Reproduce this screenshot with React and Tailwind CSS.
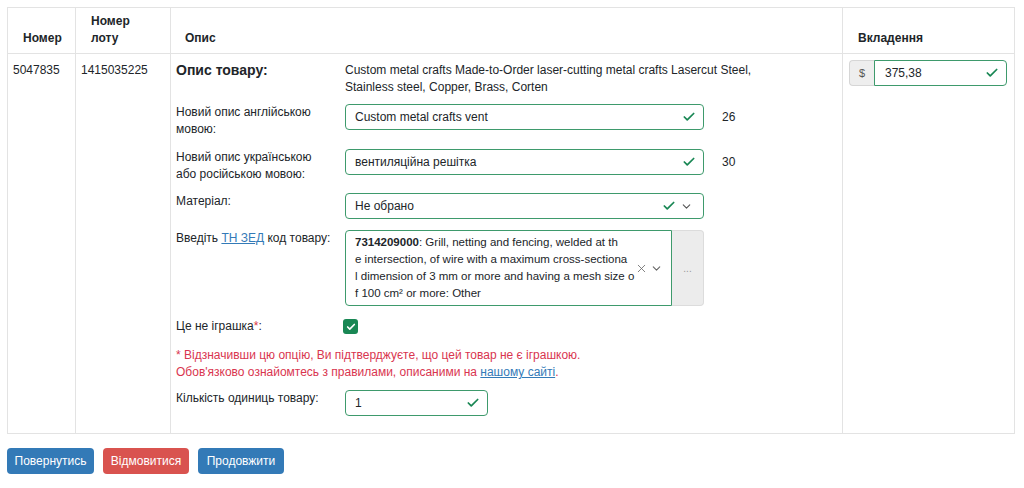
import { Check, ChevronDown, X } from 'lucide-react';

const font = { fontFamily: '"Liberation Sans", Arial, sans-serif' };

function ValidCheck({ className = '' }) {
  return <Check className={`h-[14px] w-[14px] text-[#198754] ${className}`} strokeWidth={3} />;
}

function TextInput({ value, width = 'w-[359px]' }) {
  return (
    <div className={`flex h-[26px] ${width} items-center justify-between rounded-[4px] border border-[#3e9a6c] bg-white pl-[9px] pr-[7px]`}>
      <span className="text-[12px] text-[#212529]">{value}</span>
      <ValidCheck />
    </div>
  );
}

function FormRow({ label, children, className = '' }) {
  return (
    <div className={`flex ${className}`}>
      <div className="w-[169px] shrink-0 pr-2 text-[12px] leading-[17px] text-[#212529]">{label}</div>
      {children}
    </div>
  );
}

export default function App() {
  return (
    <div className="h-[488px] w-[1024px] bg-white px-[7px] pt-[7px]" style={font}>
      <table className="w-[1007px] table-fixed border-collapse border border-[#e3e3e3] text-[12px] text-[#212529]">
        <colgroup>
          <col className="w-[68px]" />
          <col className="w-[95px]" />
          <col className="w-[672px]" />
          <col className="w-[172px]" />
        </colgroup>
        <thead>
          <tr className="h-[46px] border-b border-[#e3e3e3]">
            <th className="border-r border-[#e3e3e3] pb-[6px] pl-[15px] text-left align-bottom font-bold leading-[17px]">Номер</th>
            <th className="border-r border-[#e3e3e3] pb-[6px] pl-[15px] text-left align-bottom font-bold leading-[17px]">
              Номер
              <br />
              лоту
            </th>
            <th className="border-r border-[#e3e3e3] pb-[6px] pl-[14px] text-left align-bottom font-bold leading-[17px]">Опис</th>
            <th className="pb-[6px] pl-[15px] text-left align-bottom font-bold leading-[17px]">Вкладення</th>
          </tr>
        </thead>
        <tbody>
          <tr className="h-[380px]">
            <td className="border-r border-[#e3e3e3] pl-[5px] pr-[4px] pt-[8px] align-top leading-[17px]">5047835</td>
            <td className="border-r border-[#e3e3e3] pl-[5px] pr-[4px] pt-[8px] align-top leading-[17px]">1415035225</td>
            <td className="border-r border-[#e3e3e3] pl-[5px] pr-[4px] pt-[8px] align-top">
              <div className="flex">
                <div className="w-[169px] shrink-0 text-[14px] font-bold leading-[17px]">Опис товару:</div>
                <div className="w-[420px] text-[12px] leading-[17px]">
                  Custom metal crafts Made-to-Order laser-cutting metal crafts Lasercut Steel, Stainless steel, Copper, Brass, Corten
                </div>
              </div>

              <FormRow className="mt-[8px]" label={<>Новий опис англійською<br />мовою:</>}>
                <div className="flex items-start">
                  <TextInput value="Custom metal crafts vent" />
                  <span className="ml-[18px] leading-[26px]">26</span>
                </div>
              </FormRow>

              <FormRow className="mt-[11px]" label={<>Новий опис українською<br />або російською мовою:</>}>
                <div className="flex items-start">
                  <TextInput value="вентиляційна решітка" />
                  <span className="ml-[18px] leading-[26px]">30</span>
                </div>
              </FormRow>

              <FormRow className="mt-[10px]" label="Матеріал:">
                <div className="flex h-[26px] w-[359px] items-center justify-between rounded-[4px] border border-[#3e9a6c] bg-white pl-[9px] pr-[10px]">
                  <span>Не обрано</span>
                  <span className="flex items-center gap-[4px]">
                    <ValidCheck />
                    <ChevronDown className="h-[13px] w-[13px] text-[#555]" strokeWidth={2} />
                  </span>
                </div>
              </FormRow>

              <FormRow className="mt-[11px]" label={<>Введіть <a className="text-[#337ab7] underline">ТН ЗЕД</a> код товару:</>}>
                <div className="flex h-[76px] w-[359px]">
                  <div className="flex w-[327px] shrink-0 items-center rounded-l-[4px] border border-[#3e9a6c] bg-white pl-[9px] pr-[8px]">
                    <div className="whitespace-nowrap text-[11.5px] leading-[17px]">
                      <b>7314209000</b>: Grill, netting and fencing, welded at th
                      <br />
                      e intersection, of wire with a maximum cross-sectiona
                      <br />
                      l dimension of 3 mm or more and having a mesh size o
                      <br />
                      f 100 cm² or more: Other
                    </div>
                    <span className="ml-auto flex shrink-0 items-center gap-[2px] text-[#666]">
                      <X className="h-[13px] w-[13px]" strokeWidth={1.5} />
                      <ChevronDown className="h-[13px] w-[13px]" strokeWidth={2} />
                    </span>
                  </div>
                  <div className="flex w-[32px] shrink-0 items-center justify-center rounded-r-[4px] border border-l-0 border-[#dcdcdc] bg-[#ececec] text-[10px] text-[#999]">
                    ...
                  </div>
                </div>
              </FormRow>

              <FormRow className="mt-[12px]" label={<>Це не іграшка<span className="text-[#dc3545]">*</span>:</>}>
                <div className="ml-[-2px] flex h-[17px] items-center">
                  <span className="flex h-[15px] w-[15px] items-center justify-center rounded-[3px] bg-[#198754]">
                    <Check className="h-[10px] w-[10px] text-white" strokeWidth={4} />
                  </span>
                </div>
              </FormRow>

              <div className="mt-[12px] text-[12px] leading-[17px] text-[#d9354f]">
                * Відзначивши цю опцію, Ви підтверджуєте, що цей товар не є іграшкою.
                <br />
                Обов'язково ознайомтесь з правилами, описаними на <a className="text-[#337ab7] underline">нашому сайті</a>.
              </div>

              <FormRow className="mt-[9px]" label="Кількість одиниць товару:">
                <TextInput value="1" width="w-[143px]" />
              </FormRow>
            </td>
            <td className="px-[6px] pt-[6px] align-top">
              <div className="flex h-[26px] w-[158px]">
                <div className="flex w-[25px] items-center justify-center rounded-l-[4px] border border-r-0 border-[#d6d6d6] bg-[#eeeeee] text-[11px] text-[#555]">$</div>
                <div className="flex flex-1 items-center justify-between rounded-r-[4px] border border-[#3e9a6c] bg-white pl-[10px] pr-[7px]">
                  <span>375,38</span>
                  <ValidCheck />
                </div>
              </div>
            </td>
          </tr>
        </tbody>
      </table>

      <div className="mt-[14px] flex gap-[9px]">
        <button className="h-[26px] w-[87px] rounded-[4px] bg-[#337ab7] text-[12px] text-white">Повернутись</button>
        <button className="h-[26px] w-[86px] rounded-[4px] bg-[#d9534f] text-[12px] text-white">Відмовитися</button>
        <button className="h-[26px] w-[86px] rounded-[4px] bg-[#337ab7] text-[12px] text-white">Продовжити</button>
      </div>
    </div>
  );
}
